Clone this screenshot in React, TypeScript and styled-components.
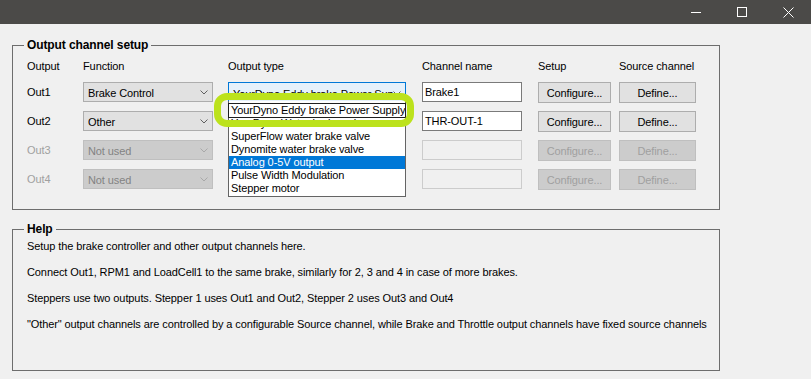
import React from 'react';
import styled, { createGlobalStyle } from 'styled-components';

// #region styles
const GlobalStyle = createGlobalStyle`
    html, body {
        margin: 0;
        padding: 0;
        background: #f0f0f0;
    }
    body {
        font-family: "Liberation Sans", Arial, sans-serif;
        font-size: 11px;
        letter-spacing: -0.1px;
        color: #000;
    }
`;

const Window = styled.div`
    position: relative;
    width: 811px;
    height: 379px;
    background: #f0f0f0;
    overflow: hidden;
`;

const TitleBar = styled.div`
    height: 24px;
    background: #4b4a48;
    display: flex;
    justify-content: flex-end;
`;

const CaptionButton = styled.div`
    width: 46px;
    height: 24px;
    display: flex;
    align-items: center;
    justify-content: center;
`;

const Content = styled.div`
    padding: 0 12px;
`;

const GroupBox = styled.fieldset<{ $top: number; $bottom: number; $padTop: number }>`
    box-sizing: border-box;
    width: 708px;
    margin: ${(p) => p.$top}px 0 0 0;
    padding: ${(p) => p.$padTop}px 10px ${(p) => p.$bottom}px 14px;
    border: 1px solid #6d6d6d;
    min-width: 0;
`;

const Legend = styled.legend`
    font-weight: bold;
    font-size: 12px;
    line-height: 14px;
    padding: 0 3px;
    margin-left: -3px;
`;

const ChannelGrid = styled.div`
    display: grid;
    grid-template-columns: 56px 145px 194px 116px 81px 77px;
    grid-template-rows: 14px repeat(4, 20px);
    row-gap: 9px;
    align-items: center;
`;

const HeaderCell = styled.div`
    line-height: 14px;
    white-space: nowrap;
`;

const RowLabel = styled.div<{ $disabled?: boolean }>`
    color: ${(p) => (p.$disabled ? '#a0a0a0' : '#000')};
    line-height: 14px;
`;

const Cell = styled.div`
    position: relative;
    height: 20px;
`;

const Combo = styled.div<{ $disabled?: boolean; $focused?: boolean; $width: number }>`
    box-sizing: border-box;
    width: ${(p) => p.$width}px;
    height: 20px;
    display: flex;
    align-items: center;
    padding: ${(p) => (p.$focused ? '3px' : '1px')} 4px 0 4px;
    border: 1px solid ${(p) => (p.$focused ? '#0078d7' : p.$disabled ? '#bfbfbf' : '#adadad')};
    background: ${(p) => (p.$focused ? '#e5f1fb' : p.$disabled ? '#cccccc' : '#e1e1e1')};
    color: ${(p) => (p.$disabled ? '#838383' : '#000')};
`;

const ComboText = styled.span`
    flex: 1;
    white-space: nowrap;
    overflow: hidden;
`;

const TextBox = styled.div<{ $disabled?: boolean }>`
    box-sizing: border-box;
    width: 100px;
    height: 20px;
    display: flex;
    align-items: center;
    padding: 0 2px;
    border: 1px solid ${(p) => (p.$disabled ? '#cccccc' : '#7a7a7a')};
    background: ${(p) => (p.$disabled ? '#f0f0f0' : '#fff')};
`;

const Button = styled.div<{ $disabled?: boolean; $width: number }>`
    box-sizing: border-box;
    width: ${(p) => p.$width}px;
    height: 21px;
    display: flex;
    align-items: center;
    justify-content: center;
    border: 1px solid ${(p) => (p.$disabled ? '#bfbfbf' : '#adadad')};
    background: ${(p) => (p.$disabled ? '#cccccc' : '#e1e1e1')};
    color: ${(p) => (p.$disabled ? '#a0a0a0' : '#000')};
`;

const DropList = styled.div`
    position: absolute;
    left: 0;
    top: 19px;
    width: 178px;
    box-sizing: border-box;
    border: 1px solid #646464;
    border-top: none;
    background: #fff;
    padding: 3px 0 1px 0;
    z-index: 2;
`;

const DropItem = styled.div<{ $selected?: boolean; $focused?: boolean }>`
    box-sizing: border-box;
    height: 13px;
    line-height: 13px;
    padding-left: 2px;
    white-space: nowrap;
    overflow: hidden;
    background: ${(p) => (p.$selected ? '#0078d7' : 'transparent')};
    color: ${(p) => (p.$selected ? '#fff' : '#000')};
    ${(p) => (p.$focused ? 'outline: 1px solid #1e1e1e; outline-offset: 0px;' : '')}
`;

const HighlightRing = styled.div`
    position: absolute;
    left: -14px;
    top: 11px;
    width: 200px;
    height: 34px;
    box-sizing: border-box;
    border: 7px solid #bce21c;
    border-radius: 13px;
    z-index: 3;
    pointer-events: none;
`;

const HelpLines = styled.div`
    display: flex;
    flex-direction: column;
    gap: 12px;
`;

const HelpLine = styled.p`
    margin: 0;
    line-height: 14px;
    white-space: nowrap;
`;
// #endregion styles

// #region parts
const Chevron = ({ color }: { color: string }) => (
    <svg width="8" height="5" viewBox="0 0 8 5">
        <polyline points="0.5,0.5 4,4 7.5,0.5" fill="none" stroke={color} strokeWidth="1" />
    </svg>
);

const outputTypes = [
    'YourDyno Eddy brake Power Supply',
    'YourDyno Water brake valve',
    'SuperFlow water brake valve',
    'Dynomite water brake valve',
    'Analog 0-5V output',
    'Pulse Width Modulation',
    'Stepper motor',
];

const rows = [
    { name: 'Out1', fn: 'Brake Control', channel: 'Brake1', disabled: false },
    { name: 'Out2', fn: 'Other', channel: 'THR-OUT-1', disabled: false },
    { name: 'Out3', fn: 'Not used', channel: '', disabled: true },
    { name: 'Out4', fn: 'Not used', channel: '', disabled: true },
];

const helpText = [
    'Setup the brake controller and other output channels here.',
    'Connect Out1, RPM1 and LoadCell1 to the same brake, similarly for 2, 3 and 4 in case of more brakes.',
    'Steppers use two outputs. Stepper 1 uses Out1 and Out2, Stepper 2 uses Out3 and Out4',
    '"Other" output channels are controlled by a configurable Source channel, while Brake and Throttle output channels have fixed source channels',
];
// #endregion parts

// #region module
export default function App() {
    return (
        <>
            <GlobalStyle />
            <Window>
                <TitleBar>
                    <CaptionButton>
                        <svg width="10" height="10" viewBox="0 0 10 10">
                            <line x1="0" y1="5.5" x2="10" y2="5.5" stroke="#fff" strokeWidth="1" />
                        </svg>
                    </CaptionButton>
                    <CaptionButton>
                        <svg width="10" height="10" viewBox="0 0 10 10">
                            <rect x="0.5" y="0.5" width="9" height="9" fill="none" stroke="#fff" strokeWidth="1" />
                        </svg>
                    </CaptionButton>
                    <CaptionButton>
                        <svg width="11" height="11" viewBox="0 0 11 11">
                            <path d="M0.5 0.5 L10.5 10.5 M10.5 0.5 L0.5 10.5" stroke="#fff" strokeWidth="1" />
                        </svg>
                    </CaptionButton>
                </TitleBar>

                <Content>
                    <GroupBox $top={14} $padTop={7} $bottom={20}>
                        <Legend>Output channel setup</Legend>
                        <ChannelGrid>
                            <HeaderCell>Output</HeaderCell>
                            <HeaderCell>Function</HeaderCell>
                            <HeaderCell>Output type</HeaderCell>
                            <HeaderCell>Channel name</HeaderCell>
                            <HeaderCell>Setup</HeaderCell>
                            <HeaderCell>Source channel</HeaderCell>

                            {rows.map((row, i) => (
                                <React.Fragment key={row.name}>
                                    <RowLabel $disabled={row.disabled}>{row.name}</RowLabel>
                                    <Cell>
                                        <Combo $width={130} $disabled={row.disabled}>
                                            <ComboText>{row.fn}</ComboText>
                                            <Chevron color={row.disabled ? '#a8a8a8' : '#606060'} />
                                        </Combo>
                                    </Cell>
                                    <Cell>
                                        {i === 0 && (
                                            <>
                                                <Combo $width={178} $focused>
                                                    <ComboText>{outputTypes[0]}</ComboText>
                                                    <Chevron color="#606060" />
                                                </Combo>
                                                <DropList>
                                                    {outputTypes.map((t, k) => (
                                                        <DropItem key={t} $focused={k === 0} $selected={k === 4}>
                                                            {t}
                                                        </DropItem>
                                                    ))}
                                                </DropList>
                                                <HighlightRing />
                                            </>
                                        )}
                                    </Cell>
                                    <Cell>
                                        <TextBox $disabled={row.disabled}>{row.channel}</TextBox>
                                    </Cell>
                                    <Cell>
                                        <Button $width={73} $disabled={row.disabled}>Configure...</Button>
                                    </Cell>
                                    <Cell>
                                        <Button $width={77} $disabled={row.disabled}>Define...</Button>
                                    </Cell>
                                </React.Fragment>
                            ))}
                        </ChannelGrid>
                    </GroupBox>

                    <GroupBox $top={12} $padTop={3} $bottom={39}>
                        <Legend>Help</Legend>
                        <HelpLines>
                            {helpText.map((line) => (
                                <HelpLine key={line}>{line}</HelpLine>
                            ))}
                        </HelpLines>
                    </GroupBox>
                </Content>
            </Window>
        </>
    );
}
// #endregion module
